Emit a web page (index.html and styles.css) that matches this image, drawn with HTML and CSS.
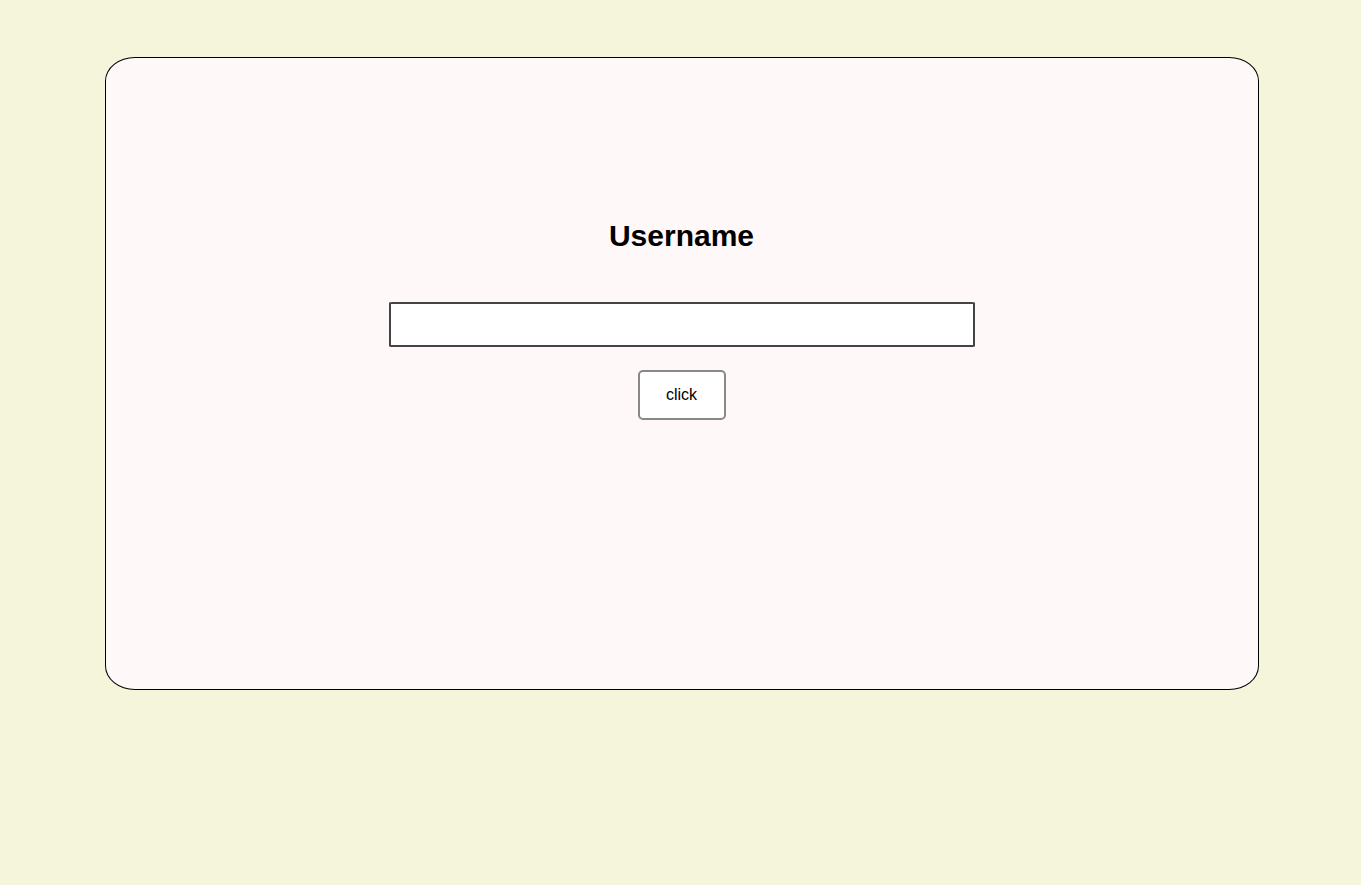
FILE: index.html
```html
<!DOCTYPE html>
<html>
<head>
<meta charset="utf-8">
<link rel="stylesheet" href="styles.css">
</head>
<body>
<div class="card">
  <h1 class="title">Username</h1>
  <input class="field" type="text">
  <button class="btn">click</button>
</div>
</body>
</html>
```
FILE: styles.css
```css
html, body {
  margin: 0;
  padding: 0;
  background: #f5f5dc;
  font-family: "Liberation Sans", Arial, sans-serif;
}
body {
  padding: 57px 0 0 2px;
  height: 885px;
  box-sizing: border-box;
}
.card {
  box-sizing: border-box;
  width: 1154px;
  height: 633px;
  margin: 0 auto;
  background: #fff8f8;
  border: 1px solid #000;
  border-radius: 30px / 24px;
  display: flex;
  flex-direction: column;
  align-items: center;
  padding-top: 161px;
}
.title {
  margin: 0;
  font-size: 30px;
  font-weight: bold;
  line-height: 34px;
  color: #000;
}
.field {
  box-sizing: border-box;
  margin-top: 49px;
  width: 586px;
  height: 45px;
  border: 2px solid #444;
  border-radius: 4px / 1px;
  background: #fff;
  outline: none;
  padding: 0 8px;
  font-size: 16px;
}
.btn {
  box-sizing: border-box;
  margin-top: 23px;
  width: 88px;
  height: 50px;
  background: #fff;
  border: 2px solid #888;
  border-radius: 5px;
  font-family: "Liberation Sans", Arial, sans-serif;
  font-size: 16px;
  color: #000;
  padding: 0;
}
```
